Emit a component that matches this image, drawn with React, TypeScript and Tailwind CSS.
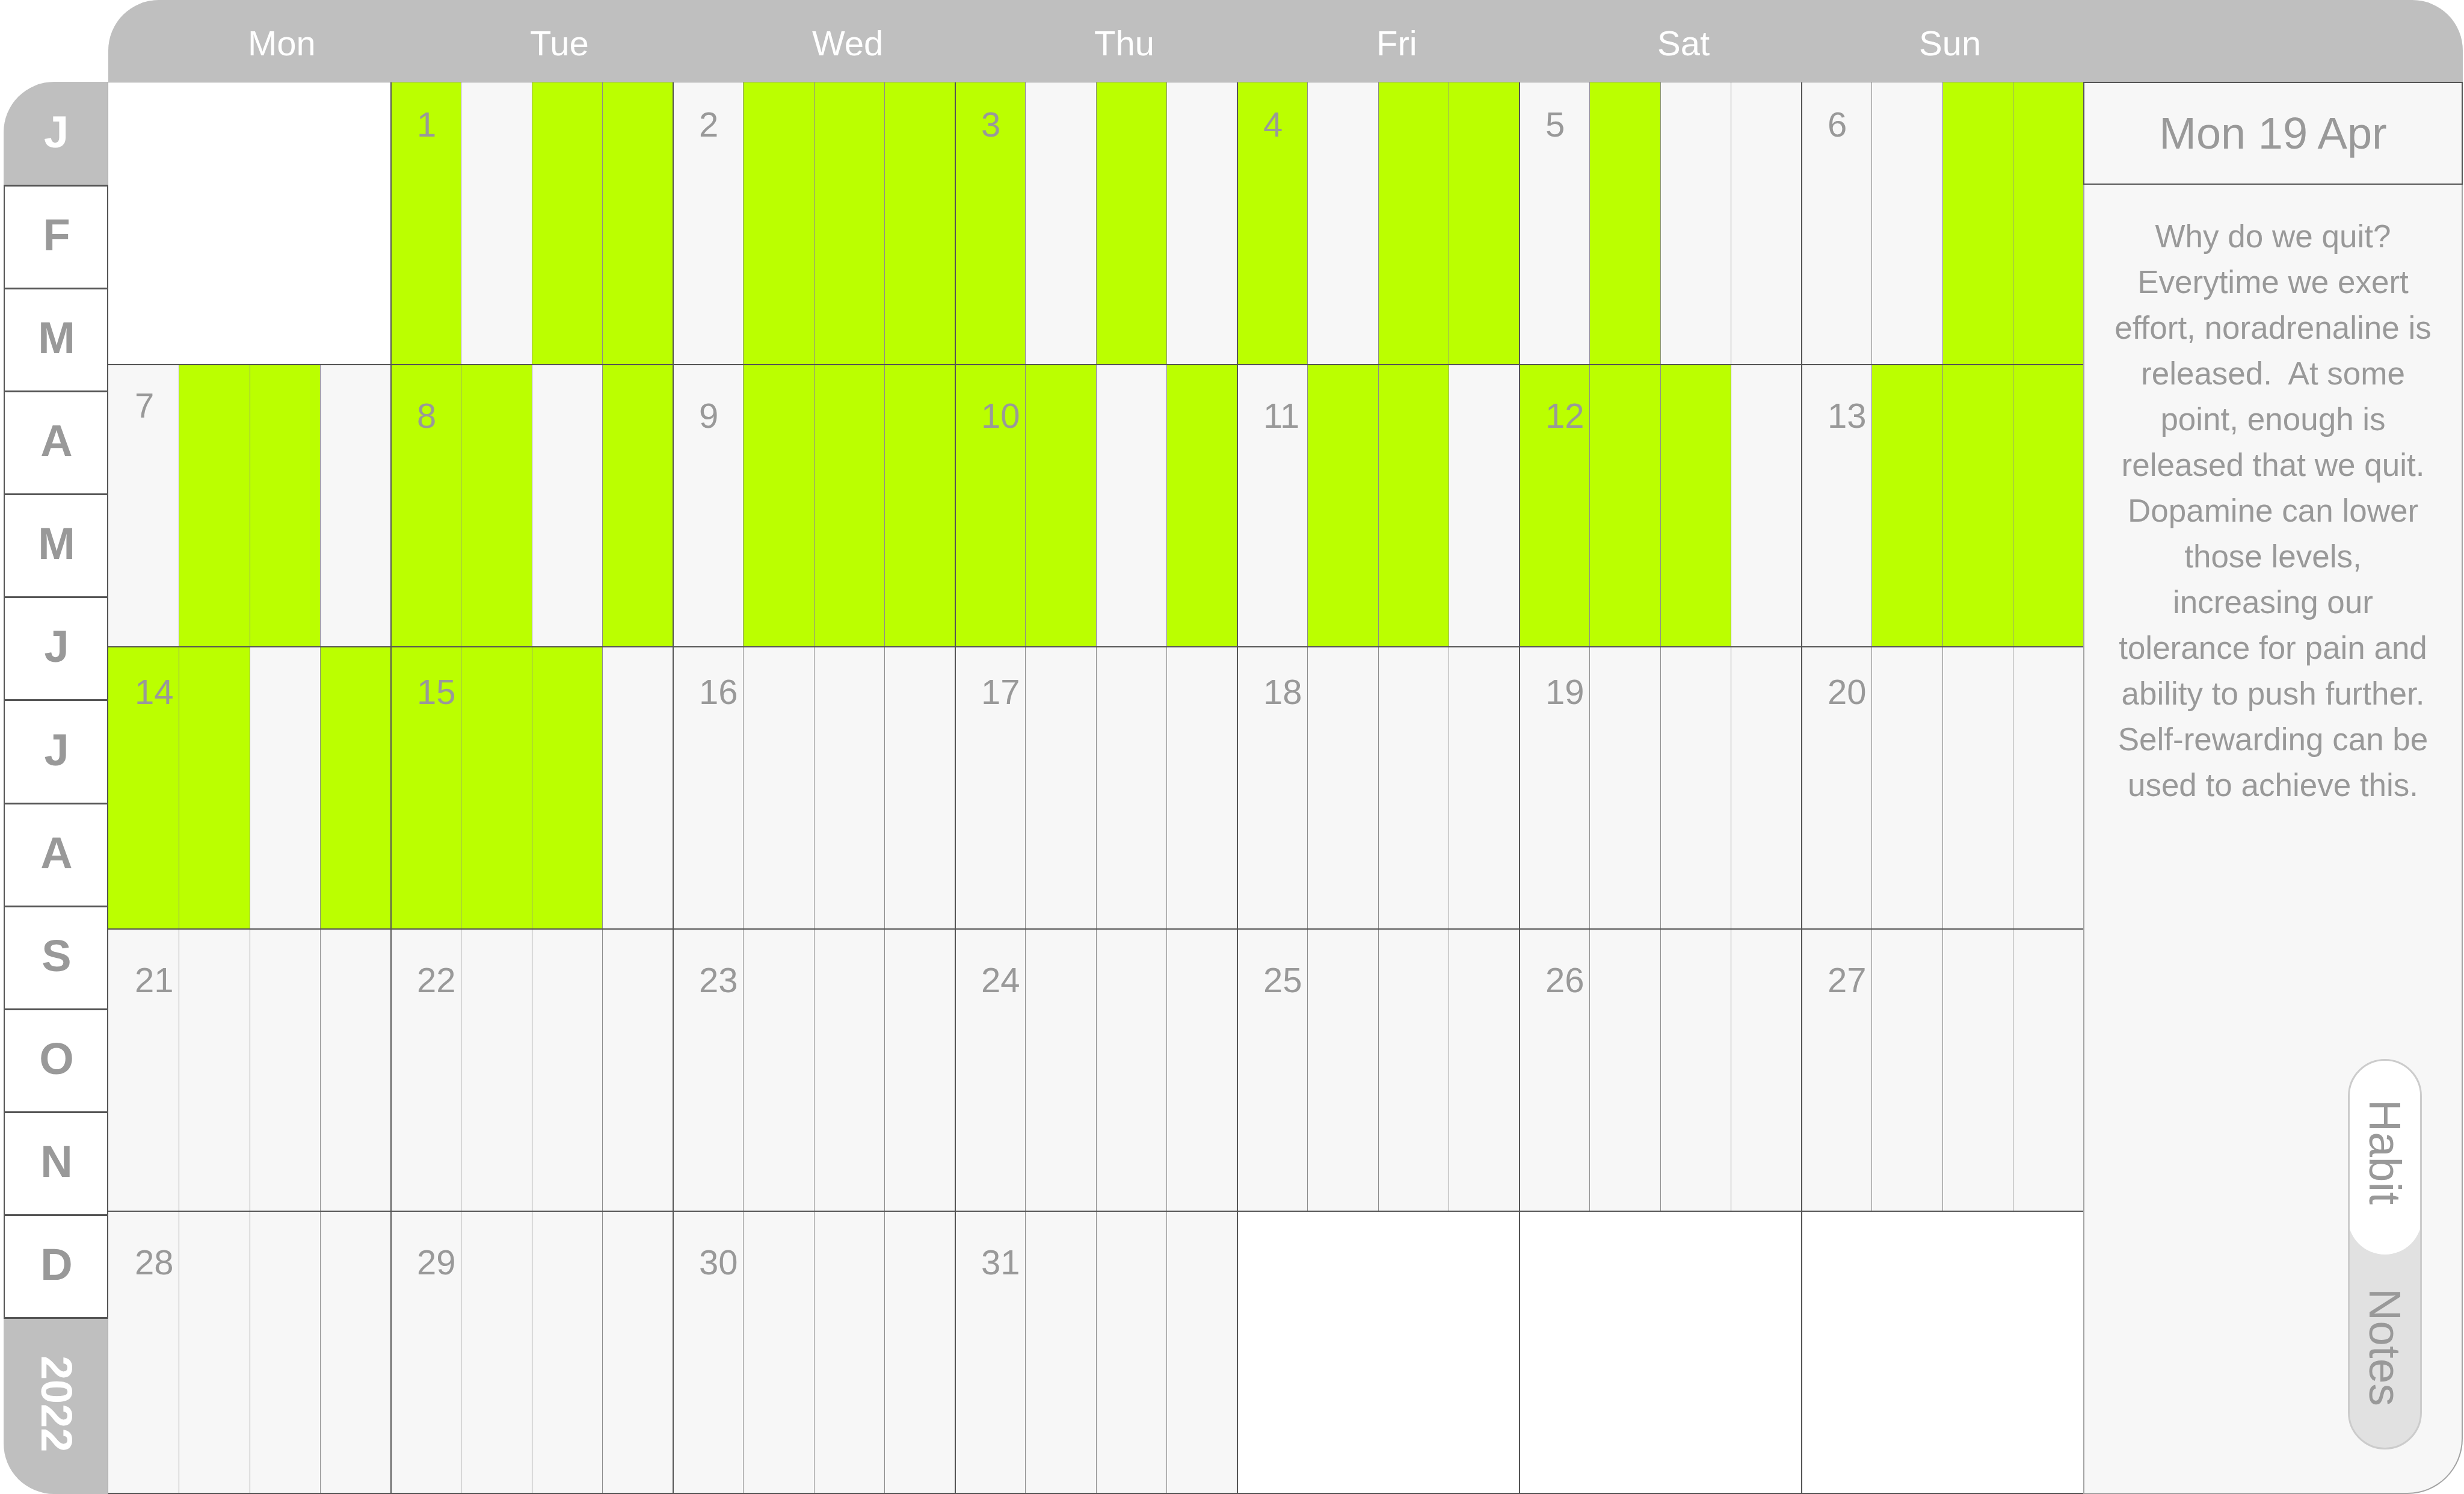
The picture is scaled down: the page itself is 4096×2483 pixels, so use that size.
import { useState } from "react";

const MONTHS = [
  { name: "January", letter: "J" },
  { name: "February", letter: "F" },
  { name: "March", letter: "M" },
  { name: "April", letter: "A" },
  { name: "May", letter: "M" },
  { name: "June", letter: "J" },
  { name: "July", letter: "J" },
  { name: "August", letter: "A" },
  { name: "September", letter: "S" },
  { name: "October", letter: "O" },
  { name: "November", letter: "N" },
  { name: "December", letter: "D" },
];

const WEEKDAYS = [
  { label: "Mon", pad: "pl-[232px]" },
  { label: "Tue", pad: "pl-[232px]" },
  { label: "Wed", pad: "pl-[232px]" },
  { label: "Thu", pad: "pl-[232px]" },
  { label: "Fri", pad: "pl-[232px]" },
  { label: "Sat", pad: "pl-[230px]" },
  { label: "Sun", pad: "pl-[196px]" },
];

type Day = { date: number; slots: string } | null;

const day = (date: number, slots = "0000"): Day => ({ date, slots });

const WEEKS: { pad: string; days: Day[] }[] = [
  {
    pad: "pt-[40px]",
    days: [null, day(1, "1011"), day(2, "0111"), day(3, "1010"), day(4, "1011"), day(5, "0100"), day(6, "0011")],
  },
  {
    pad: "pt-[54px]",
    days: [
      day(7, "0110"),
      day(8, "1101"),
      day(9, "0111"),
      day(10, "1101"),
      day(11, "0110"),
      day(12, "1110"),
      day(13, "0111"),
    ],
  },
  {
    pad: "pt-[44px]",
    days: [day(14, "1101"), day(15, "1110"), day(16), day(17), day(18), day(19), day(20)],
  },
  {
    pad: "pt-[54px]",
    days: [day(21), day(22), day(23), day(24), day(25), day(26), day(27)],
  },
  {
    pad: "pt-[54px]",
    days: [day(28), day(29), day(30), day(31), null, null, null],
  },
];

const NOTE = `Why do we quit?
Everytime we exert
effort, noradrenaline is
released.  At some
point, enough is
released that we quit.
Dopamine can lower
those levels,
increasing our
tolerance for pain and
ability to push further.
Self-rewarding can be
used to achieve this.`;

function MonthNav() {
  return (
    <nav aria-label="Months" className="flex w-[174px] shrink-0 flex-col pt-[136px]">
      <div className="grid flex-1 grid-rows-12">
        {MONTHS.map((m, i) => (
          <button
            key={m.name}
            type="button"
            aria-label={m.name}
            className={
              i === 0
                ? "flex items-center justify-center rounded-tl-[84px] border-r border-[#999] bg-[#bfbfbf] pb-1 pl-[2px] text-[74px] leading-none font-bold text-white"
                : "flex items-center justify-center border-x-2 border-t-3 border-[#555] bg-white pb-[6px] pl-[2px] text-[74px] leading-none font-bold text-[#999]"
            }
          >
            {m.letter}
          </button>
        ))}
      </div>
      <button
        type="button"
        className="flex h-[294px] items-center justify-center rounded-bl-[84px] border-t-3 border-r border-t-[#555] border-r-[#999] bg-[#bfbfbf] pb-2 pl-[2px] text-[72px] leading-none font-bold text-white"
      >
        <span className="[writing-mode:vertical-rl]">2022</span>
      </button>
    </nav>
  );
}

function DayCell({ value, first, pad }: { value: Day; first: boolean; pad: string }) {
  const edge = first ? "" : "border-l-2 border-[#555]";
  if (!value) return <div className={`bg-white ${edge}`} />;
  return (
    <div className="grid grid-cols-4">
      {value.slots.split("").map((slot, i) => (
        <button
          key={i}
          type="button"
          aria-label={`Day ${value.date}, habit ${i + 1}`}
          aria-pressed={slot === "1"}
          className={`flex min-w-0 items-start text-[58px] leading-[60px] whitespace-nowrap text-[#999] ${
            slot === "1" ? "bg-[#bbff00]" : "bg-[#f7f7f7]"
          } ${i > 0 ? "border-l border-[#8c8c8c]" : `${edge} ${first ? "pl-[44px]" : "pl-[42px]"} ${pad}`}`}
        >
          {i === 0 && value.date}
        </button>
      ))}
    </div>
  );
}

function Calendar() {
  return (
    <section aria-label="January 2022" className="grid min-w-0 flex-1 grid-rows-5 border-b-2 border-[#555]">
      {WEEKS.map((week, w) => (
        <div
          key={w}
          className={`grid grid-cols-7 ${w === 0 ? "border-t border-[#999]" : "border-t-2 border-[#555]"}`}
        >
          {week.days.map((d, i) => (
            <DayCell key={i} value={d} first={i === 0} pad={d?.date === 7 ? "pt-[37px]" : week.pad} />
          ))}
        </div>
      ))}
    </section>
  );
}

function Sidebar() {
  const [mode, setMode] = useState<"habit" | "notes">("habit");
  const base = "flex flex-1 items-center justify-center rounded-full pb-4 text-[75px] leading-none text-[#999]";
  return (
    <aside className="flex w-[631px] shrink-0 flex-col rounded-br-[92px] border-x-2 border-b-2 border-[#a3a3a3] bg-[#f7f7f7]">
      <h1 className="-mx-[2px] flex h-[171px] items-center justify-center border-2 border-[#555] text-[74px] leading-none">
        Mon 19 Apr
      </h1>
      <p className="pt-12 text-center text-[53px] leading-[76px] whitespace-pre">{NOTE}</p>
      <div
        role="group"
        aria-label="View"
        className="mt-auto mr-[66px] mb-[72px] flex h-[649px] w-[123px] flex-col self-end overflow-hidden rounded-full border-3 border-[#ccc] bg-[#e1e1e1]"
      >
        <div className="-m-[3px] flex flex-1 flex-col">
          <button
            type="button"
            aria-pressed={mode === "habit"}
            onClick={() => setMode("habit")}
            className={`${base} ${mode === "habit" ? "bg-white" : ""}`}
          >
            <span className="[writing-mode:vertical-rl]">Habit</span>
          </button>
          <button
            type="button"
            aria-pressed={mode === "notes"}
            onClick={() => setMode("notes")}
            className={`${base} ${mode === "notes" ? "bg-white" : ""}`}
          >
            <span className="[writing-mode:vertical-rl]">Notes</span>
          </button>
        </div>
      </div>
    </aside>
  );
}

export default function App() {
  return (
    <div className="flex h-screen w-full bg-white pr-[2px] pl-[6px] font-['Liberation_Sans',Arial,sans-serif] text-[#999]">
      <MonthNav />
      <main className="flex min-w-0 flex-1 flex-col">
        <header className="flex h-[136px] shrink-0 items-center rounded-t-[84px] bg-[#bfbfbf] pt-2 text-[58px] leading-none text-white">
          <div className="grid flex-1 grid-cols-7">
            {WEEKDAYS.map((d) => (
              <span key={d.label} className={d.pad}>
                {d.label}
              </span>
            ))}
          </div>
          <div className="w-[631px] shrink-0" />
        </header>
        <div className="flex min-h-0 flex-1">
          <Calendar />
          <Sidebar />
        </div>
      </main>
    </div>
  );
}
